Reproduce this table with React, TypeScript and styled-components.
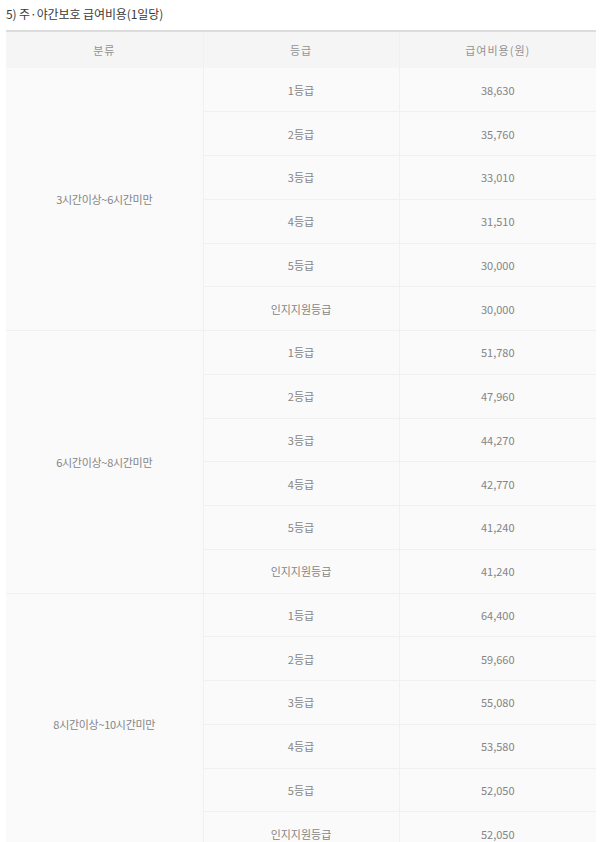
import React from 'react';
import styled, { createGlobalStyle } from 'styled-components';

const GlobalStyle = createGlobalStyle`
  html, body {
    margin: 0;
    padding: 0;
    background: #ffffff;
  }
  body {
    font-family: "Noto Sans CJK KR", "Noto Sans", sans-serif;
  }
`;

const Page = styled.div`
  padding: 5px 4px 0 6px;
  width: 590px;
`;

const Title = styled.h5`
  margin: 0 0 8px;
  font-size: 12px;
  line-height: 17px;
  font-weight: 400;
  color: #3a3a3a;
  letter-spacing: -0.1px;
`;

const Table = styled.table`
  width: 590px;
  border-collapse: collapse;
  table-layout: fixed;
  border-top: 2px solid #dcdcdc;
  background: #fafafa;
  font-size: 11px;
  color: #858585;
`;

const HeadCell = styled.th`
  height: 36px;
  padding: 0;
  background: #f5f5f5;
  font-weight: 400;
  color: #939393;
  letter-spacing: 1px;
  text-align: center;
  border-left: 1px solid #f0f0f0;
  &:first-child {
    border-left: none;
  }
`;

const Row = styled.tr`
  height: 43.75px;
`;

const Cell = styled.td<{ $group?: boolean }>`
  padding: 0;
  text-align: center;
  vertical-align: middle;
  border-bottom: 1px solid #f0f0f0;
  border-left: ${(p) => (p.$group ? 'none' : '1px solid #f0f0f0')};
  letter-spacing: ${(p) => (p.$group ? '-0.3px' : '0')};
`;

const groups = [
  { label: '3시간이상~6시간미만', costs: ['38,630', '35,760', '33,010', '31,510', '30,000', '30,000'] },
  { label: '6시간이상~8시간미만', costs: ['51,780', '47,960', '44,270', '42,770', '41,240', '41,240'] },
  { label: '8시간이상~10시간미만', costs: ['64,400', '59,660', '55,080', '53,580', '52,050', '52,050'] },
];

const grades = ['1등급', '2등급', '3등급', '4등급', '5등급', '인지지원등급'];

export default function App() {
  return (
    <>
      <GlobalStyle />
      <Page>
        <Title>5) 주·야간보호 급여비용(1일당)</Title>
        <Table>
          <colgroup>
            <col style={{ width: 197 }} />
            <col style={{ width: 196 }} />
            <col style={{ width: 197 }} />
          </colgroup>
          <thead>
            <tr>
              <HeadCell>분류</HeadCell>
              <HeadCell>등급</HeadCell>
              <HeadCell>급여비용(원)</HeadCell>
            </tr>
          </thead>
          <tbody>
            {groups.map((g) =>
              grades.map((grade, i) => (
                <Row key={g.label + grade}>
                  {i === 0 && (
                    <Cell $group rowSpan={grades.length}>
                      {g.label}
                    </Cell>
                  )}
                  <Cell>{grade}</Cell>
                  <Cell>{g.costs[i]}</Cell>
                </Row>
              ))
            )}
          </tbody>
        </Table>
      </Page>
    </>
  );
}
